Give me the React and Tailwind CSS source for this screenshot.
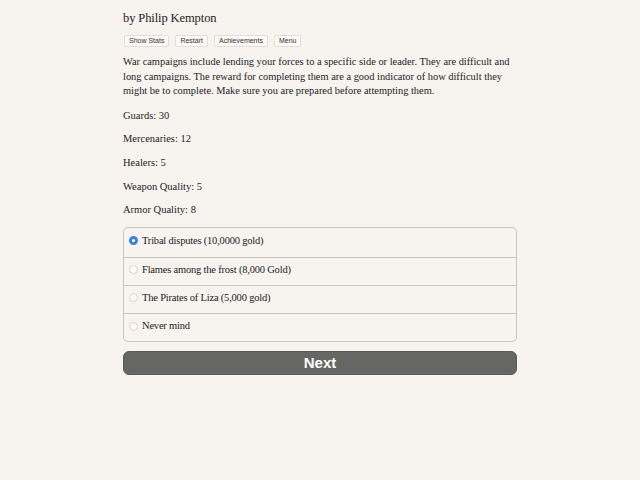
import React from "react";

const serif = { fontFamily: '"Liberation Serif", "Times New Roman", serif' };

const stats = [
  "Guards: 30",
  "Mercenaries: 12",
  "Healers: 5",
  "Weapon Quality: 5",
  "Armor Quality: 8",
];

const options = [
  "Tribal disputes (10,0000 gold)",
  "Flames among the frost (8,000 Gold)",
  "The Pirates of Liza (5,000 gold)",
  "Never mind",
];

function Radio({ checked }) {
  if (checked) {
    return (
      <span className="w-[9px] h-[9px] rounded-full bg-[#3b82e0] flex items-center justify-center shrink-0">
        <span className="w-[3px] h-[3px] rounded-full bg-white" />
      </span>
    );
  }
  return <span className="w-[9px] h-[9px] rounded-full border border-[#d6d3cf] bg-[#fbfaf8] shrink-0" />;
}

export default function App() {
  return (
    <div className="min-h-[480px] w-full bg-[#f7f4f0] text-[#1c1c1c]" style={serif}>
      <div className="w-[394px] mx-auto pt-[9px]">
        <div className="text-[12.5px] leading-[18px] tracking-[-0.1px]">by Philip Kempton</div>
        <div className="flex gap-[6px] mt-[8px] ml-[1px]" style={{ fontFamily: '"Liberation Sans", Arial, sans-serif' }}>
          {["Show Stats", "Restart", "Achievements", "Menu"].map((b) => (
            <span
              key={b}
              className="text-[7px] leading-[8px] px-[4px] py-[1px] bg-[#fbfaf8] border border-[#e2ded8] rounded-[2px] text-[#333]"
            >
              {b}
            </span>
          ))}
        </div>
        <p className="text-[10.4px] leading-[14.5px] mt-[8px]">
          War campaigns include lending your forces to a specific side or leader. They are difficult and long campaigns. The reward for completing them are a good indicator of how difficult they might be to complete. Make sure you are prepared before attempting them.
        </p>
        <div className="mt-[10px] flex flex-col gap-[9.7px]">
          {stats.map((s) => (
            <p key={s} className="text-[10.5px] leading-[14px]">{s}</p>
          ))}
        </div>
        <div className="mt-[10px] border border-[#c9c6c2] rounded-[5px] bg-[#f7f4f0] overflow-hidden">
          {options.map((o, i) => (
            <div
              key={o}
              className={`flex items-center gap-[4px] h-[28.25px] pl-[5px] pb-[3px] text-[10.5px] tracking-[-0.2px] ${i > 0 ? "border-t border-[#c9c6c2]" : ""}`}
            >
              <Radio checked={i === 0} />
              <span>{o}</span>
            </div>
          ))}
        </div>
        <button
          className="mt-[9px] w-full h-[24px] rounded-[6px] bg-[#666664] text-white text-[15px] font-bold border border-[#5a5a58]"
          style={{ fontFamily: '"Liberation Sans", Arial, sans-serif' }}
        >
          Next
        </button>
      </div>
    </div>
  );
}
